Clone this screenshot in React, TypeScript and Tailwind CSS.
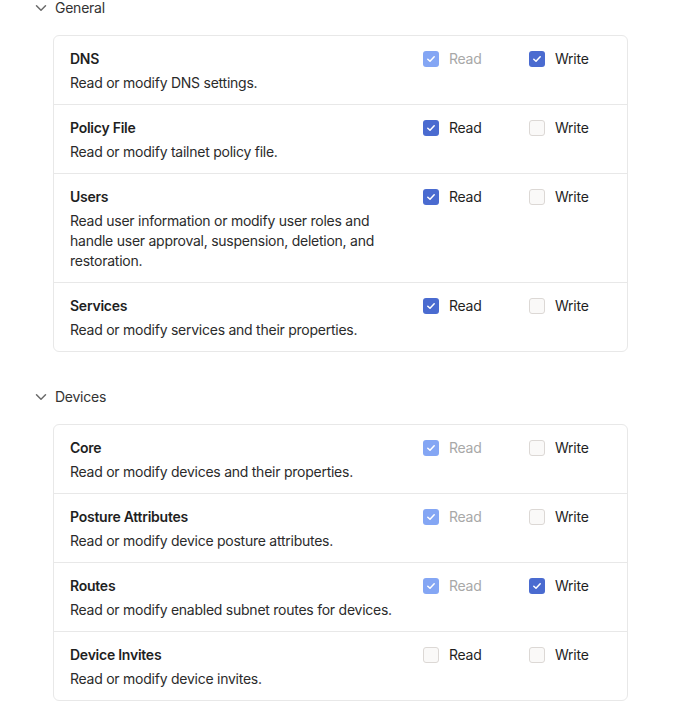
import { ChevronDown } from "lucide-react";

type Perm = {
  title: string;
  desc: string;
  read: "on" | "off" | "locked";
  write: "on" | "off";
};

const general: Perm[] = [
  { title: "DNS", desc: "Read or modify DNS settings.", read: "locked", write: "on" },
  { title: "Policy File", desc: "Read or modify tailnet policy file.", read: "on", write: "off" },
  {
    title: "Users",
    desc: "Read user information or modify user roles and handle user approval, suspension, deletion, and restoration.",
    read: "on",
    write: "off",
  },
  { title: "Services", desc: "Read or modify services and their properties.", read: "on", write: "off" },
];

const devices: Perm[] = [
  { title: "Core", desc: "Read or modify devices and their properties.", read: "locked", write: "off" },
  { title: "Posture Attributes", desc: "Read or modify device posture attributes.", read: "locked", write: "off" },
  { title: "Routes", desc: "Read or modify enabled subnet routes for devices.", read: "locked", write: "on" },
  { title: "Device Invites", desc: "Read or modify device invites.", read: "off", write: "off" },
];

function Check({ state, label }: { state: "on" | "off" | "locked"; label: string }) {
  return (
    <div className="flex items-center gap-[10px] h-5">
      {state === "off" ? (
        <span className="w-4 h-4 rounded-[3px] border border-[#dcd8d5] bg-[#faf9f8]" />
      ) : (
        <span
          className={
            state === "on"
              ? "w-4 h-4 rounded-[3px] bg-[#4a6bd0] flex items-center justify-center"
              : "w-4 h-4 rounded-[3px] bg-[#84a6f4] flex items-center justify-center"
          }
        >
          <svg width="10" height="10" viewBox="0 0 10 10" fill="none">
            <path d="M1.8 5.2L4 7.3L8.2 2.8" stroke="white" strokeWidth="1.5" strokeLinecap="round" strokeLinejoin="round" />
          </svg>
        </span>
      )}
      <span className={state === "locked" ? "text-[#a8a8a8]" : "text-[#1f1f1f]"}>{label}</span>
    </div>
  );
}

function Section({ name, items }: { name: string; items: Perm[] }) {
  return (
    <div>
      <div className="flex items-center gap-[5px] h-5 pl-[32px] text-[#333]">
        <ChevronDown size={18} strokeWidth={2} className="text-[#6b6b6b]" />
        <span>{name}</span>
      </div>
      <div className="ml-[53px] w-[575px] mt-[17px] border border-[#e8e8e8] rounded-md bg-white">
        {items.map((p, i) => (
          <div
            key={p.title}
            className={"flex px-4 pt-[13px] pb-[11px] " + (i > 0 ? "border-t border-[#e8e8e8]" : "")}
          >
            <div className="flex-1 pr-6">
              <div className="font-semibold text-[#1f1f1f] leading-5">{p.title}</div>
              <div className="mt-1 text-[#2b2b2b] leading-5">{p.desc}</div>
            </div>
            <div className="w-[189px] flex items-start">
              <div className="w-[107px] pl-px">
                <Check state={p.read} label="Read" />
              </div>
              <Check state={p.write} label="Write" />
            </div>
          </div>
        ))}
      </div>
    </div>
  );
}

export default function App() {
  return (
    <div
      className="bg-white min-h-screen text-sm tracking-[-0.25px]"
      style={{ fontFamily: "Inter, 'Noto Sans', sans-serif" }}
    >
      <div className="-mt-[2px]">
        <Section name="General" items={general} />
        <div className="h-[35px]" />
        <Section name="Devices" items={devices} />
      </div>
    </div>
  );
}
